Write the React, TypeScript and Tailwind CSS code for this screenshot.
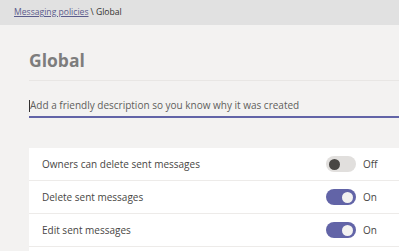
const rows = [
  { label: "Owners can delete sent messages", on: false },
  { label: "Delete sent messages", on: true },
  { label: "Edit sent messages", on: true },
];

const Toggle = ({ on }: { on: boolean }) => (
  <div className="flex items-center gap-[7px] pr-[20px]">
    <div
      className={
        on
          ? "flex h-[16px] w-[30px] items-center justify-end rounded-full bg-[#6264a7] px-[3px]"
          : "flex h-[16px] w-[30px] items-center justify-start rounded-full bg-[#e1dfdd] px-[3px]"
      }
    >
      <div className={on ? "h-[11px] w-[11px] rounded-full bg-[#f3f2f1]" : "h-[11px] w-[11px] rounded-full bg-[#484644]"} />
    </div>
    <span className="w-[16px] text-[10px] text-[#484644]">{on ? "On" : "Off"}</span>
  </div>
);

export default function App() {
  return (
    <div className="h-[251px] w-[399px] overflow-hidden bg-[#f3f2f1] font-['Open_Sans',sans-serif]">
      <div className="flex h-[25px] items-center bg-[#e1e1e1] px-[14px] text-[8.6px] text-[#323130]">
        <span className="text-[#5b5c8c] underline">Messaging policies</span>
        <span className="ml-[2px]">\ Global</span>
      </div>
      <div className="pl-[29px]">
        <div className="border-b border-[#e8e6e4] pt-[23px] pb-[8px] text-[17.5px] font-bold leading-[24px] text-[#7d7d7d]">
          Global
        </div>
        <div className="mt-[14px] flex h-[23px] items-center border-b-2 border-[#6264a7] text-[10px] text-[#605e5c]">
          <span className="h-[12px] w-px bg-[#323130]" />
          Add a friendly description so you know why it was created
        </div>
        <div className="mt-[30px] bg-white">
          {rows.map((r) => (
            <div
              key={r.label}
              className="flex h-[33px] items-center justify-between border-b border-[#edebe9] pl-[13px] text-[10px] text-[#484644]"
            >
              <span>{r.label}</span>
              <Toggle on={r.on} />
            </div>
          ))}
          <div className="h-[20px]" />
        </div>
      </div>
    </div>
  );
}
